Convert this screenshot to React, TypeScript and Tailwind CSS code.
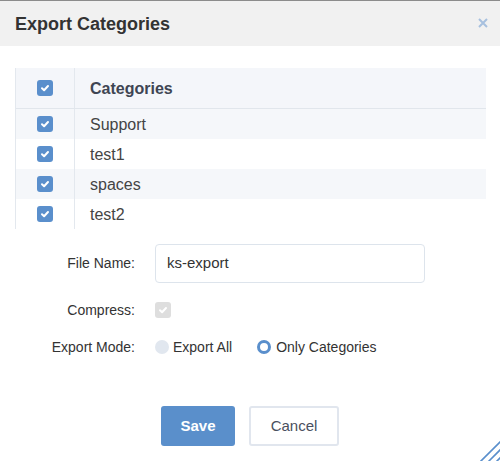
import React from 'react'

const categories = ['Support', 'test1', 'spaces', 'test2']

function Check({ disabled = false }: { disabled?: boolean }) {
  return (
    <span
      className={
        'flex h-[16px] w-[16px] items-center justify-center rounded-[3px] ' +
        (disabled ? 'bg-[#dedede]' : 'bg-[#5a8fcc]')
      }
    >
      <svg width="10" height="10" viewBox="0 0 10 10">
        <path d="M2 5.2 L4.1 7.2 L8 3" fill="none" stroke="#fff" strokeWidth="2" strokeLinecap="round" strokeLinejoin="round" />
      </svg>
    </span>
  )
}

export default function App() {
  return (
    <div className="relative h-[461px] w-[500px] overflow-hidden bg-white font-['Liberation_Sans',Arial,sans-serif] text-[#333]">
      {/* title bar */}
      <div className="flex h-[46px] items-center justify-between border-t border-[#8c8c8c] bg-[#f1f1f1] pl-[15px] pr-[12px]">
        <h1 className="pt-[1px] text-[18px] font-bold text-[#333]">Export Categories</h1>
        <svg width="10" height="10" viewBox="0 0 10 10" className="mt-[-2px]">
          <path d="M1 1 L9 9 M9 1 L1 9" stroke="#a7c0df" strokeWidth="2" />
        </svg>
      </div>

      {/* categories table */}
      <div className="ml-[15px] mr-[14px] mt-[22px] border-l border-[#e3e8ee]">
        <div className="flex h-[41px] border-b border-[#e1e6ec] bg-[#f4f6fa]">
          <div className="flex w-[59px] items-center justify-center border-r border-[#e3e8ee] pr-[1px]">
            <Check />
          </div>
          <div className="flex items-center pl-[15px] pt-[1px] text-[16px] font-bold text-[#3e4553]">Categories</div>
        </div>
        {categories.map((c, i) => (
          <div key={c} className={'flex h-[30px] ' + (i % 2 === 0 ? 'bg-[#f5f7fa]' : 'bg-white')}>
            <div className="flex w-[59px] items-center justify-center border-r border-[#e3e8ee] pr-[1px]">
              <Check />
            </div>
            <div className="flex items-center pl-[15px] pt-[2px] text-[16px] text-[#444]">{c}</div>
          </div>
        ))}
      </div>

      {/* form */}
      <div className="mt-[15px] flex flex-col text-[14px]">
        <div className="flex h-[39px] items-center">
          <label className="w-[135px] text-right">File Name:</label>
          <div className="ml-[20px] flex h-[39px] w-[270px] items-center rounded-[4px] border border-[#dde4ec] px-[11px] text-[15px] text-[#333]">
            ks-export
          </div>
        </div>
        <div className="mt-[17px] flex h-[20px] items-center">
          <label className="w-[135px] text-right">Compress:</label>
          <div className="ml-[20px]">
            <Check disabled />
          </div>
        </div>
        <div className="mt-[17px] flex h-[20px] items-center">
          <label className="w-[135px] text-right">Export Mode:</label>
          <div className="ml-[20px] flex items-center gap-[4px]">
            <span className="h-[14px] w-[14px] rounded-full bg-[#e1e7ef]" />
            <span>Export All</span>
          </div>
          <div className="ml-[25px] flex items-center gap-[5px]">
            <span className="h-[14px] w-[14px] rounded-full border-[3px] border-[#5a8fcc] bg-white" />
            <span>Only Categories</span>
          </div>
        </div>
        <div className="mt-[49px] flex justify-center gap-[14px]">
          <button className="h-[40px] w-[74px] rounded-[3px] bg-[#5a8fcb] text-[15px] font-bold text-white">Save</button>
          <button className="h-[40px] w-[90px] rounded-[3px] border-2 border-[#e1e6ee] bg-white text-[15px] text-[#4a505e]">Cancel</button>
        </div>
      </div>

      {/* resize grip */}
      <svg width="20" height="20" viewBox="0 0 20 20" className="absolute bottom-0 right-0">
        <path d="M0 21 L21 0 M8 21 L21 8 M16 21 L21 16" stroke="#5a8fcc" strokeWidth="1.6" />
      </svg>
    </div>
  )
}
